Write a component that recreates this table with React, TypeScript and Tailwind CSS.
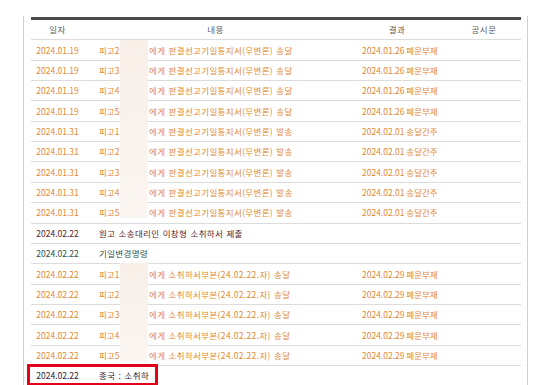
type Row = { date: string; who?: string; text: string; result?: string; tone: string };

const orange = "text-[#e38a2f]";

const rows: Row[] = [
  ...[2, 3, 4, 5].map((n) => ({ date: "2024.01.19", who: `피고${n}`, text: "에게 판결선고기일통지서(무변론) 송달", result: "2024.01.26 폐문부재", tone: orange })),
  ...[1, 2, 3, 4, 5].map((n) => ({ date: "2024.01.31", who: `피고${n}`, text: "에게 판결선고기일통지서(무변론) 발송", result: "2024.02.01 송달간주", tone: orange })),
  { date: "2024.02.22", text: "원고 소송대리인 이창형 소취하서 제출", tone: "text-[#5a1c1c]" },
  { date: "2024.02.22", text: "기일변경명령", tone: "text-[#2d4f4b]" },
  ...[1, 2, 3, 4, 5].map((n) => ({ date: "2024.02.22", who: `피고${n}`, text: "에게 소취하서부본(24.02.22.자) 송달", result: "2024.02.29 폐문부재", tone: orange })),
  { date: "2024.02.22", text: "종국 : 소취하", tone: "text-[#1d1d3a]" },
];

export default function App() {
  return (
    <div className="w-[551px] h-[385px] overflow-hidden bg-white pt-[16px] pl-[23px]" style={{ fontFamily: '"Noto Sans CJK KR", "Noto Sans", sans-serif' }}>
      <div className="w-[505px] min-h-[380px] border-l border-r border-[#cfcfcf] pl-[7px] pr-[5px] pt-[1px]">
        <div className="relative w-[490px] text-[8.5px]">
          <div className="h-[3px] bg-[#4a4a4a]" />
          <div className="h-[20.3px] grid grid-cols-[53px_263px_100px_74px] items-center border-b border-[#dcdcdc] text-[#5a5a5a] text-center tracking-[0.5px]">
            <div>일자</div>
            <div>내용</div>
            <div>결과</div>
            <div>공시문</div>
          </div>
          {rows.map((r, i) => (
            <div key={i} className={`h-[20.36px] grid grid-cols-[53px_263px_100px_74px] items-center border-b border-[#dcdcdc] whitespace-nowrap ${r.tone}`}>
              <div className="text-center">{r.date}</div>
              <div className="pl-[15px] flex">
                {r.who && <span className="w-[50px]">{r.who}</span>}
                <span className="tracking-[0.35px] [word-spacing:1px]">{r.text}</span>
              </div>
              <div className="pl-[15px]">{r.result}</div>
              <div />
            </div>
          ))}

          {/* blurred names */}
          <div className="absolute left-[89px] top-[23px] w-[28px] h-[178px] bg-gradient-to-b from-[#f8efe8] to-[#fbf6f2]" />
          <div className="absolute left-[89px] top-[246px] w-[28px] h-[99px] bg-gradient-to-b from-[#f8efe8] to-[#fbf6f2]" />

          {/* highlight */}
          <div className="absolute left-[-4px] top-[347px] w-[131px] h-[22px] border-[3px] border-[#e3001b]" />
        </div>
      </div>
    </div>
  );
}
